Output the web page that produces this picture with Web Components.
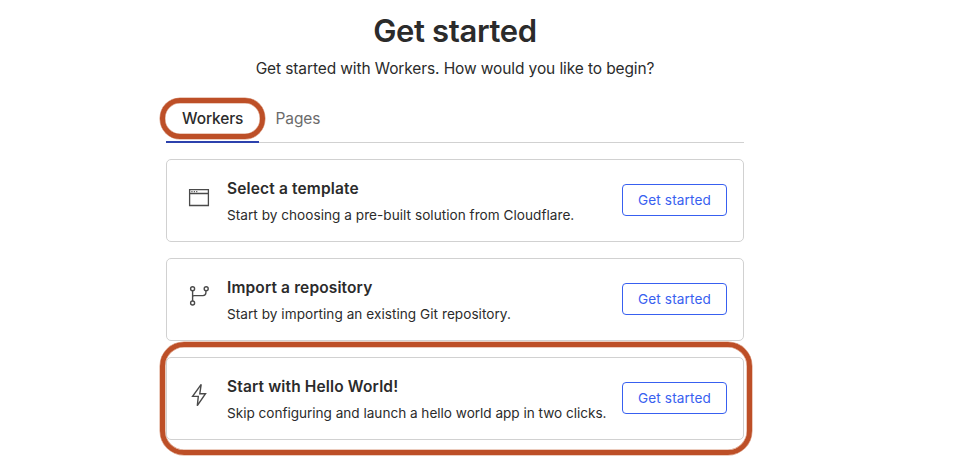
<!DOCTYPE html>
<html lang="en"><head><meta charset="utf-8"><title>Get started</title>
<style>
body{margin:0;background:#fff;color:#2b2b2b;font-family:Inter,"Liberation Sans",sans-serif}
</style></head><body>
<start-page></start-page>
<template id="start-page">
<style>
:host{display:block;height:474px;overflow:hidden}
main{width:578px;margin-left:166px}
header{text-align:center}
h1{margin:0;padding-top:11px;font-size:31px;line-height:40px;font-weight:600;letter-spacing:-.35px}
p{margin:8px 0 0;font-size:15.5px;line-height:20px;letter-spacing:-.11px}
nav{display:flex;margin-top:17px;height:46px;border-bottom:1px solid #d1d1d1}
section{display:grid;gap:16px;margin-top:16px}
</style>
<main>
<header><h1>Get started</h1><p>Get started with Workers. How would you like to begin?</p></header>
<nav><tab-item selected>Workers</tab-item><tab-item>Pages</tab-item></nav>
<section>
<option-card style="--ts:.15px;--ds:.03px"><svg slot="icon" width="24" height="24" viewBox="0 0 24 24" fill="none" stroke="#4a4a4a" stroke-width="1.3"><path d="M2.6 4.6h18.8v15.9H2.6zM2.6 8.5h18.8"/><path d="M4.4 6.6h1.1M6.8 6.6h1.1M9.2 6.6h1.1"/></svg><span slot="title">Select a template</span><span slot="text">Start by choosing a pre-built solution from Cloudflare.</span></option-card>
<option-card style="--ts:.13px;--ds:.04px"><svg slot="icon" width="24" height="24" viewBox="0 0 24 24" fill="none" stroke="#4a4a4a" stroke-width="1.4"><circle cx="5.6" cy="4.8" r="2"/><circle cx="5.6" cy="19" r="2"/><circle cx="19.2" cy="4.8" r="2"/><path d="M5.6 6.8v10.1M5.6 12.9q0-1.3 1.4-1.3H16q2.8 0 2.9-2.8V6.8"/></svg><span slot="title">Import a repository</span><span slot="text">Start by importing an existing Git repository.</span></option-card>
<option-card marked style="--ts:.14px;--ds:-.02px"><svg slot="icon" width="24" height="24" viewBox="0 0 24 24" fill="none" stroke="#4a4a4a" stroke-width="1.4"><path d="M14.2 1.3 5.6 13.4h5.7l-1 9.3 8.2-12h-5.7z"/></svg><span slot="title">Start with Hello World!</span><span slot="text">Skip configuring and launch a hello world app in two clicks.</span></option-card>
</section>
</main>
</template>
<template id="tab-item">
<style>
:host{display:block;position:relative;box-sizing:border-box;height:47px;padding:13px 0 0 16.5px;font-size:15.5px;line-height:20px;color:#6b6b6b;letter-spacing:-.1px}
:host([selected]){width:93px;padding-left:16px;color:#2b2b2b;font-weight:500;letter-spacing:-.12px;border-bottom:2px solid #2c41ad}
i{display:none}
:host([selected]) i{display:block;position:absolute;left:-6.5px;top:2.4px;width:95px;height:30.4px;border:5px solid #bd4f27;border-radius:20px;box-shadow:0 0 0 .5px #d99a7f,inset 0 0 0 .5px #d99a7f}
</style><slot></slot><i></i>
</template>
<template id="option-card">
<style>
:host{display:flex;position:relative;box-sizing:border-box;height:83px;border:1px solid #d1d1d1;border-radius:5px;padding:0 16px 0 20px}
.icon{width:24px;padding-top:25px;margin-right:16px;height:24px}
.copy{flex:1;padding-top:19px;white-space:nowrap}
h2{margin:0;font-size:15.5px;line-height:20px;font-weight:600;letter-spacing:var(--ts)}
p{margin:6px 0 0;font-size:13.6px;line-height:20px;letter-spacing:var(--ds)}
action-button{margin-top:24px}
i{display:none}
:host([marked]) i{display:block;position:absolute;left:-7.5px;top:-16px;width:582.5px;height:102.5px;border:5px solid #bd4f27;border-radius:24px;box-shadow:0 0 0 .5px #d99a7f,inset 0 0 0 .5px #d99a7f;pointer-events:none}
</style>
<div class="icon"><slot name="icon"></slot></div>
<div class="copy"><h2><slot name="title"></slot></h2><p><slot name="text"></slot></p></div>
<action-button>Get started</action-button><i></i>
</template>
<template id="action-button">
<style>
:host{display:block}
button{display:block;box-sizing:border-box;width:105px;height:32px;margin:0;padding:0;border:1px solid #3860f0;border-radius:4px;background:#fff;color:#3860f0;font:400 13.6px/20px Inter,"Liberation Sans",sans-serif;letter-spacing:.13px}
</style><button><slot></slot></button>
</template>
<script>
for (const name of ['action-button','tab-item','option-card','start-page']) {
  customElements.define(name, class extends HTMLElement {
    constructor() {
      super();
      this.attachShadow({mode:'open'}).append(document.getElementById(name).content.cloneNode(true));
    }
  });
}
</script></body></html>
